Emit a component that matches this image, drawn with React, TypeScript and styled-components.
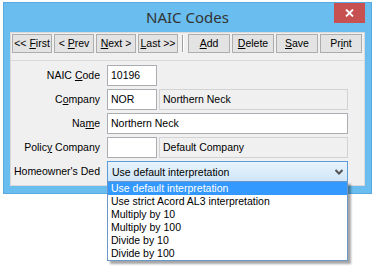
import React from "react";
import styled, { createGlobalStyle } from "styled-components";

const GlobalStyle = createGlobalStyle`
  html, body { margin: 0; padding: 0; background: #ffffff; }
  body {
    font-family: "Liberation Sans", Arial, sans-serif;
    font-size: 10.5px;
    color: #000;
  }
  * { box-sizing: border-box; }
`;

const Page = styled.div`
  min-height: 100vh;
  padding: 2px 0 0 3px;
`;

const Window = styled.div`
  width: 369px;
  border: 1px solid #58a9e0;
  background: #69bdef;
`;

const TitleBar = styled.div`
  height: 29px;
  display: grid;
  grid-template-columns: 1fr auto 1fr;
`;

const Title = styled.div`
  grid-column: 2;
  font-family: "Noto Sans", "Open Sans", sans-serif;
  font-size: 15px;
  line-height: 20px;
  color: #333;
  padding-top: 4px;
`;

const CloseButton = styled.div`
  grid-column: 3;
  justify-self: end;
  align-self: start;
  width: 31px;
  height: 20px;
  margin-right: 6px;
  background: #c75050;
  display: flex;
  align-items: center;
  justify-content: center;
`;

const Body = styled.div`
  padding: 0 6px 7px 6px;
`;

const Client = styled.div`
  background: #f0f0f0;
`;

const Toolbar = styled.div`
  height: 28px;
  display: flex;
  align-items: flex-start;
  gap: 2px;
  padding: 1px;
  border: 1px solid #dadada;
  border-bottom: none;
`;

const Button = styled.div<{ $w: number }>`
  width: ${(p) => p.$w}px;
  height: 19px;
  border: 1px solid #adadad;
  background: #e3e3e3;
  text-align: center;
  line-height: 17px;
  white-space: pre;
`;

const Separator = styled.div`
  width: 2px;
  height: 17px;
  margin: 1px 2px 0 2px;
  border-left: 1px solid #a0a0a0;
  border-right: 1px solid #ffffff;
`;

const Form = styled.div`
  border: 1px solid #dadada;
  padding: 4px 0 3px 0;
  display: grid;
  grid-template-columns: 89px 241px;
  grid-auto-rows: 21px;
  column-gap: 7px;
  row-gap: 3px;
`;

const Label = styled.div`
  text-align: right;
  line-height: 21px;
  white-space: pre;
`;

const FieldRow = styled.div`
  display: flex;
  gap: 2px;
`;

const TextBox = styled.div<{ $w?: number }>`
  ${(p) => (p.$w ? `width: ${p.$w}px;` : "flex: 1;")}
  height: 21px;
  border: 1px solid #abadb3;
  background: #ffffff;
  padding: 0 3px;
  line-height: 19px;
  white-space: nowrap;
`;

const ReadOnlyBox = styled(TextBox)`
  background: #f0f0f0;
  border-color: #d3d3d3;
`;

const Combo = styled.div`
  position: relative;
  height: 21px;
  border: 1px solid #5b9bd8;
  background: linear-gradient(#e8f3fc, #cfe6f9);
  display: flex;
  align-items: center;
  justify-content: space-between;
  padding: 0 4px 0 4px;
  white-space: nowrap;
`;

const DropList = styled.div`
  position: absolute;
  top: 19px;
  left: -1px;
  width: 241px;
  border: 1px solid #6c97c9;
  background: #ffffff;
  box-shadow: 3px 3px 2px rgba(0, 0, 0, 0.35);
  z-index: 10;
`;

const Option = styled.div<{ $selected?: boolean }>`
  height: 13px;
  line-height: 13px;
  padding-left: 3px;
  white-space: nowrap;
  background: ${(p) => (p.$selected ? "#3399ff" : "transparent")};
  color: ${(p) => (p.$selected ? "#ffffff" : "#000000")};
`;

const options = [
  "Use default interpretation",
  "Use strict Acord AL3 interpretation",
  "Multiply by 10",
  "Multiply by 100",
  "Divide by 10",
  "Divide by 100",
];

export default function App() {
  return (
    <>
      <GlobalStyle />
      <Page>
        <Window>
          <TitleBar>
            <Title>NAIC Codes</Title>
            <CloseButton>
              <svg width="9" height="8" viewBox="0 0 9 8">
                <path d="M1 0.5 L8 7.5 M8 0.5 L1 7.5" stroke="#fff" strokeWidth="1.8" />
              </svg>
            </CloseButton>
          </TitleBar>
          <Body>
            <Client>
              <Toolbar>
                <Button $w={40}>{"<< "}<u>F</u>irst</Button>
                <Button $w={40}>{"< "}<u>P</u>rev</Button>
                <Button $w={40}><u>N</u>{"ext >"}</Button>
                <Button $w={40}><u>L</u>{"ast >>"}</Button>
                <Separator />
                <Button $w={42}><u>A</u>dd</Button>
                <Button $w={42}><u>D</u>elete</Button>
                <Button $w={42}><u>S</u>ave</Button>
                <Button $w={42}>Pr<u>i</u>nt</Button>
              </Toolbar>
              <Form>
                <Label>{"NAIC "}<u>C</u>ode</Label>
                <FieldRow>
                  <TextBox $w={50}>10196</TextBox>
                </FieldRow>

                <Label>C<u>o</u>mpany</Label>
                <FieldRow>
                  <TextBox $w={50}>NOR</TextBox>
                  <ReadOnlyBox>Northern Neck</ReadOnlyBox>
                </FieldRow>

                <Label>Na<u>m</u>e</Label>
                <FieldRow>
                  <TextBox>Northern Neck</TextBox>
                </FieldRow>

                <Label>Polic<u>y</u>{" Company"}</Label>
                <FieldRow>
                  <TextBox $w={50}></TextBox>
                  <ReadOnlyBox>Default Company</ReadOnlyBox>
                </FieldRow>

                <Label>Homeowner's Ded</Label>
                <Combo>
                  <span>Use default interpretation</span>
                  <svg width="8" height="6" viewBox="0 0 8 6">
                    <path d="M0.5 1 L4 4.5 L7.5 1" stroke="#555" strokeWidth="2" fill="none" />
                  </svg>
                  <DropList>
                    {options.map((o, i) => (
                      <Option key={o} $selected={i === 0}>
                        {o}
                      </Option>
                    ))}
                  </DropList>
                </Combo>
              </Form>
            </Client>
          </Body>
        </Window>
      </Page>
    </>
  );
}
